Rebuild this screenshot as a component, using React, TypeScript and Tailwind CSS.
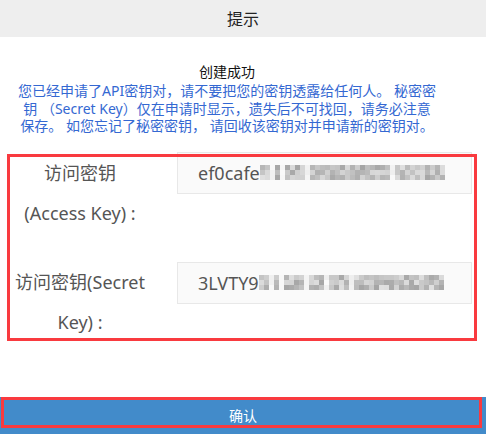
import React from "react";

function Pixelated({ seed }: { seed: number }) {
  const cols = 37;
  const rows = 3;
  let s = seed;
  const rnd = () => {
    s = (s * 1103515245 + 12345) % 2147483648;
    return s / 2147483648;
  };
  const cells: React.ReactElement[] = [];
  for (let c = 0; c < cols; c++) {
    const colBase = rnd();
    for (let r = 0; r < rows; r++) {
      const v = colBase < 0.12 ? 238 + Math.floor(rnd() * 12) : 165 + Math.floor(rnd() * 60);
      cells.push(
        <rect key={`${c}-${r}`} x={c * 5} y={r * 5} width={5} height={5} fill={`rgb(${v},${v},${v})`} />
      );
    }
  }
  return (
    <svg width={185} height={15} viewBox="0 0 185 15" className="block shrink-0">
      {cells}
    </svg>
  );
}

export default function App() {
  const font = { fontFamily: '"Noto Sans", "Noto Sans CJK SC", sans-serif' };
  return (
    <div
      className="relative w-[486px] h-[434px] bg-white flex flex-col overflow-hidden"
      style={font}
    >
      <div className="h-[37px] bg-[#eeeeee] flex items-center justify-center text-[16px] text-[#222]">
        提示
      </div>

      <div className="ml-[14px] w-[426px] flex flex-col">
        <div className="mt-[26px] text-center text-[14px] leading-[18px] text-[#111]">创建成功</div>
        <div className="mt-[1px] text-center text-[14px] leading-[17.5px] text-[#3468d2] whitespace-nowrap">
          您已经申请了API密钥对，请不要把您的密钥透露给任何人。 秘密密
          <br />
          钥 （Secret Key）仅在申请时显示，遗失后不可找回，请务必注意
          <br />
          保存。 如您忘记了秘密密钥， 请回收该密钥对并申请新的密钥对。
        </div>
      </div>

      <div className="mt-[17px] flex flex-col gap-[29px]">
        <div className="flex items-start">
          <div className="w-[160px] pt-[1px] text-center text-[18px] leading-[40px] text-[#555] whitespace-nowrap">
            访问密钥
            <br />
            (Access Key) :
          </div>
          <div className="ml-[17px] w-[295px] h-[42px] border border-[#e8e8e8] bg-[#fafafa] flex items-center pl-[20px] text-[18px] text-[#555]">
            <span className="leading-none">ef0cafe</span>
            <Pixelated seed={7} />
          </div>
        </div>
        <div className="flex items-start">
          <div className="w-[160px] text-center text-[18px] leading-[40px] text-[#555] whitespace-nowrap">
            访问密钥(Secret
            <br />
            Key) :
          </div>
          <div className="ml-[17px] w-[295px] h-[42px] border border-[#e8e8e8] bg-[#fafafa] flex items-center pl-[20px] text-[18px] text-[#555]">
            <span className="leading-none">3LVTY9</span>
            <Pixelated seed={42} />
          </div>
        </div>
      </div>

      <div className="mt-auto h-[37px] bg-[#428bca] flex items-center justify-center text-white text-[14px]">
        确认
      </div>

      <div className="absolute left-[7px] top-[154px] w-[470px] h-[187px] border-[3px] border-[#f93a3f] pointer-events-none" />
      <div className="absolute left-[1px] top-[397px] w-[481px] h-[31px] border-[3px] border-[#f93a3f] pointer-events-none" />
    </div>
  );
}
